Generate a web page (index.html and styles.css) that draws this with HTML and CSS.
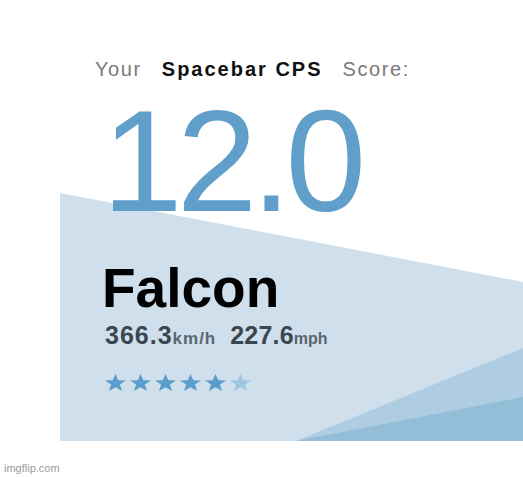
FILE: index.html
```html
<!DOCTYPE html>
<html lang="en">
<head>
    <meta charset="UTF-8">
    <title>Spacebar CPS Score</title>
    <link rel="stylesheet" href="styles.css">
</head>
<body>
    <div class="card">
        <!-- Background wedges -->
        <svg class="backdrop" width="463" height="441" viewBox="0 0 463 441">
            <polygon points="0,193 463,282 463,441 0,441" fill="#cfe0ec"/>
            <polygon points="236,441 463,348 463,441" fill="#afcde2"/>
            <polygon points="236,441 463,397 463,441" fill="#94bdd8"/>
        </svg>

        <div class="content">
            <div class="heading">
                <span class="muted">Your</span>
                <span class="test-name">Spacebar CPS</span>
                <span class="muted">Score:</span>
            </div>
            <div class="score">12.0</div>
            <h1 class="rank">Falcon</h1>
            <div class="speed">
                <span class="value">366.3</span><span class="unit">km/h</span><span class="value second">227.6</span><span class="unit">mph</span>
            </div>
            <div class="stars">
                <svg class="star" viewBox="1 1 22 20.6" preserveAspectRatio="none"><polygon points="12,1 14.9,8.6 23,8.8 16.6,13.8 18.9,21.6 12,17 5.1,21.6 7.4,13.8 1,8.8 9.1,8.6"/></svg>
                <svg class="star" viewBox="1 1 22 20.6" preserveAspectRatio="none"><polygon points="12,1 14.9,8.6 23,8.8 16.6,13.8 18.9,21.6 12,17 5.1,21.6 7.4,13.8 1,8.8 9.1,8.6"/></svg>
                <svg class="star" viewBox="1 1 22 20.6" preserveAspectRatio="none"><polygon points="12,1 14.9,8.6 23,8.8 16.6,13.8 18.9,21.6 12,17 5.1,21.6 7.4,13.8 1,8.8 9.1,8.6"/></svg>
                <svg class="star" viewBox="1 1 22 20.6" preserveAspectRatio="none"><polygon points="12,1 14.9,8.6 23,8.8 16.6,13.8 18.9,21.6 12,17 5.1,21.6 7.4,13.8 1,8.8 9.1,8.6"/></svg>
                <svg class="star" viewBox="1 1 22 20.6" preserveAspectRatio="none"><polygon points="12,1 14.9,8.6 23,8.8 16.6,13.8 18.9,21.6 12,17 5.1,21.6 7.4,13.8 1,8.8 9.1,8.6"/></svg>
                <svg class="star half" viewBox="1 1 22 20.6" preserveAspectRatio="none"><polygon points="12,1 14.9,8.6 23,8.8 16.6,13.8 18.9,21.6 12,17 5.1,21.6 7.4,13.8 1,8.8 9.1,8.6"/></svg>
            </div>
        </div>
    </div>

    <div class="watermark">imgflip.com</div>
</body>
</html>
```

FILE: styles.css
```css
/* General Styling */
body {
    margin: 0;
    background: #fff;
    font-family: "Liberation Sans", Arial, sans-serif;
    width: 523px;
    overflow: hidden;
}

.card {
    position: relative;
    margin-left: 60px;
    width: 463px;
    height: 441px;
}

.backdrop {
    position: absolute;
    left: 0;
    top: 0;
    display: block;
}

.content {
    position: relative;
    padding-top: 56px;
}

/* Heading line */
.heading {
    display: flex;
    gap: 20px;
    padding-left: 35px;
    font-size: 20px;
    line-height: 26px;
    letter-spacing: 1.6px;
}

.muted {
    color: #7a7a7a;
}

.test-name {
    color: #111;
    font-weight: bold;
    letter-spacing: 2px;
}

/* Big number */
.score {
    margin-top: 7px;
    padding-left: 42px;
    font-size: 145px;
    line-height: 144px;
    letter-spacing: -6px;
    color: #5f9fc9;
}

.rank {
    margin: 25px 0 0;
    padding-left: 42px;
    font-size: 55px;
    line-height: 60px;
    font-weight: bold;
    color: #000;
}

.speed {
    margin-top: 3px;
    padding-left: 45px;
    line-height: 28px;
    font-weight: bold;
    letter-spacing: 1px;
}

.speed .value {
    font-size: 25px;
    color: #3c4650;
}

.speed .second {
    margin-left: 14px;
    letter-spacing: 0.2px;
}

.speed .unit {
    font-size: 17px;
    color: #5a6570;
}

.speed .unit:last-child {
    font-size: 16px;
    letter-spacing: 0;
}

/* Rating */
.stars {
    display: flex;
    gap: 4px;
    margin-top: 21px;
    padding-left: 45px;
}

.star {
    width: 21px;
    height: 17px;
    fill: #5a9cca;
}

.star.half {
    fill: #9dc6e1;
}

.watermark {
    margin-top: 21px;
    padding-left: 4px;
    font-size: 11px;
    line-height: 13px;
    color: #9a9a9a;
}
```
